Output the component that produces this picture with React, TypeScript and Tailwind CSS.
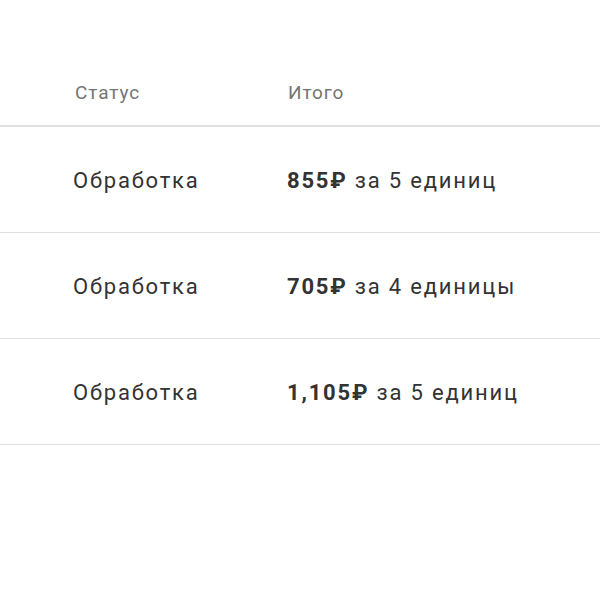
const ROWS: readonly { total: string; qty: string }[] = [
  { total: "855₽", qty: "за 5 единиц" },
  { total: "705₽", qty: "за 4 единицы" },
  { total: "1,105₽", qty: "за 5 единиц" },
];

export default function App(): React.ReactElement {
  return (
    <div className="h-[600px] w-[600px] bg-white font-['Roboto',sans-serif]">
      {/* Header */}
      <div className="flex h-[127px] items-end border-b-2 border-[#e0e0e0] pb-[20px] text-[19px] leading-6 tracking-[0.9px] text-[#757575]">
        <div className="w-[288px] pl-[75px]">Статус</div>
        <div>Итого</div>
      </div>

      {/* Rows */}
      {ROWS.map((row) => (
        <div
          key={row.total}
          className="flex h-[106px] items-center border-b border-[#e0e0e0] pt-[2px] text-[22px] tracking-[1.8px] text-[#333]"
        >
          <div className="w-[287px] pl-[73px]">Обработка</div>
          <div>
            <span className="font-bold">{row.total}</span> {row.qty}
          </div>
        </div>
      ))}
    </div>
  );
}
